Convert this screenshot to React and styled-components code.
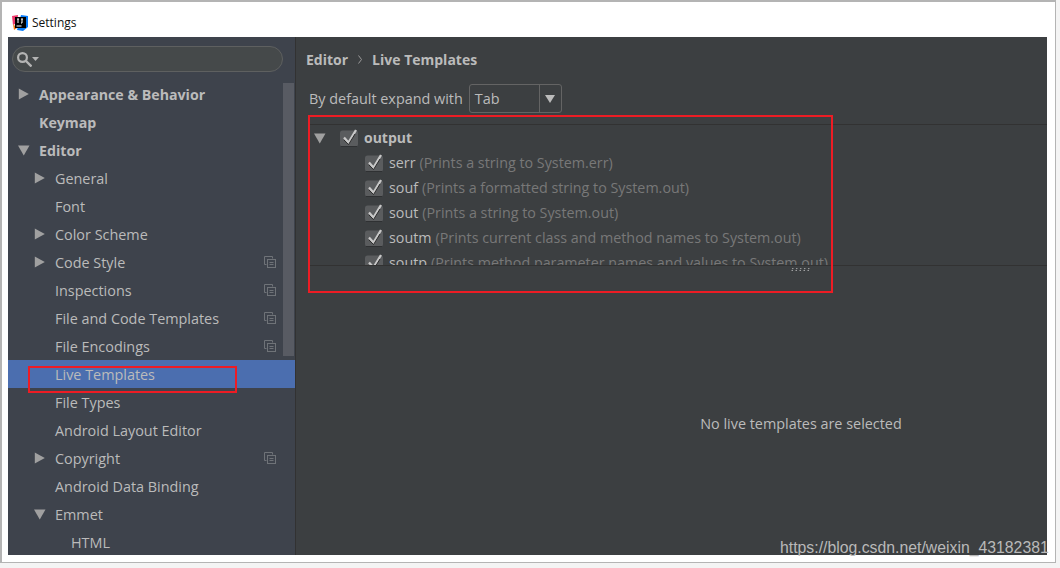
import React from 'react'
import styled, { createGlobalStyle } from 'styled-components'

const Global = createGlobalStyle`
  html, body {
    margin: 0;
    padding: 0;
    background: #f4f4f4;
    overflow: hidden;
  }
`

const Page = styled.div`
  position: relative;
  width: 1060px;
  height: 568px;
  box-sizing: border-box;
  padding-right: 4px;
  padding-bottom: 5px;
  font-family: 'Open Sans', 'Noto Sans', sans-serif;
`
const Shell = styled.div`
  height: 100%;
  box-sizing: border-box;
  border: 2px solid #b4b4b4;
  border-right-width: 1px;
  border-bottom-width: 1px;
  background: #fff;
  padding: 6px 8px 7px 6px;
`
const Win = styled.div`
  display: flex;
  flex-direction: column;
  height: 100%;
  background: #3c3f41;
`
const TitleBar = styled.div`
  display: flex;
  align-items: center;
  gap: 4px;
  height: 29px;
  padding-left: 4px;
  background: #fff;
  flex: none;
`
const TitleText = styled.span`
  font-size: 12px;
  color: #111;
`
const Body = styled.div`
  display: flex;
  flex: 1;
  min-height: 0;
`
const Sidebar = styled.div`
  position: relative;
  width: 287px;
  flex: none;
  background: #3e434c;
  border-right: 1px solid #323232;
  overflow: hidden;
  padding-top: 9px;
`
const SearchBox = styled.div`
  display: flex;
  align-items: center;
  box-sizing: border-box;
  width: 271px;
  height: 26px;
  margin-left: 4px;
  padding-left: 4px;
  border: 1px solid #5e6060;
  border-radius: 13px;
  background: #45494a;
`
const Tree = styled.div`
  margin-top: 8px;
`
const Row = styled.div`
  display: flex;
  align-items: center;
  height: 28px;
  padding-left: ${p => 10 + p.$depth * 16}px;
  background: ${p => (p.$selected ? '#4b6eaf' : 'transparent')};
  color: #bbbbbb;
  font-size: ${p => (p.$bold ? 14.2 : 14.4)}px;
  font-weight: ${p => (p.$bold ? 700 : 400)};
`
const ArrowSlot = styled.span`
  display: flex;
  align-items: center;
  width: 21px;
  flex: none;
`
const RowLabel = styled.span`
  flex: 1;
`
const CopySlot = styled.span`
  display: flex;
  margin-right: 19px;
`
const Scrollbar = styled.div`
  position: absolute;
  top: 46px;
  right: 1px;
  width: 11px;
  height: 273px;
  background: #585b63;
`
const Content = styled.div`
  flex: 1;
  display: flex;
  flex-direction: column;
  min-width: 0;
`
const Crumbs = styled.div`
  display: flex;
  align-items: center;
  gap: 10px;
  box-sizing: border-box;
  height: 47px;
  padding: 0 0 3px 10px;
  color: #bbbbbb;
  font-size: 14px;
  font-weight: 700;
`
const ExpandRow = styled.div`
  display: flex;
  align-items: center;
  gap: 6px;
  height: 29px;
  padding-left: 13px;
  color: #bbbbbb;
  font-size: 14.4px;
`
const Combo = styled.div`
  display: flex;
  box-sizing: border-box;
  width: 93px;
  height: 29px;
  border: 1px solid #646464;
  border-radius: 3px;
`
const ComboValue = styled.div`
  flex: 1;
  display: flex;
  align-items: center;
  padding-left: 5px;
  border-right: 1px solid #646464;
`
const ComboArrow = styled.div`
  display: flex;
  align-items: center;
  justify-content: center;
  width: 21px;
`
const TemplateList = styled.div`
  height: 140px;
  margin: 11px 0 0 13px;
  border-top: 1px solid #323232;
  border-bottom: 1px solid #323232;
  overflow: hidden;
`
const GroupRow = styled.div`
  display: flex;
  align-items: center;
  height: 25px;
  padding-left: 5px;
  color: #bbbbbb;
  font-size: 14px;
  font-weight: 700;
`
const GroupArrow = styled.span`
  display: flex;
  width: 26px;
`
const GroupName = styled.span`
  margin-left: 6px;
`
const ItemRow = styled.div`
  display: flex;
  align-items: center;
  height: 25px;
  padding-left: 56px;
  font-size: 14.3px;
  white-space: nowrap;
`
const ItemName = styled.span`
  margin-left: 6px;
  color: #bbbbbb;
`
const ItemDesc = styled.span`
  margin-left: 4px;
  color: #787878;
`
const Grip = styled.svg`
  position: absolute;
  left: 791px;
  top: 267px;
`
const EmptyNote = styled.div`
  flex: 1;
  display: flex;
  align-items: center;
  justify-content: center;
  padding: 25px 0 0 259px;
  color: #bbbbbb;
  font-size: 14.4px;
`
const RedBox = styled.div`
  position: absolute;
  box-sizing: border-box;
  border: 2px solid #ed1c24;
  left: ${p => p.$x}px;
  top: ${p => p.$y}px;
  width: ${p => p.$w}px;
  height: ${p => p.$h}px;
`
const Watermark = styled.div`
  position: absolute;
  left: 780px;
  top: 539px;
  font-family: 'Liberation Sans', Arial, sans-serif;
  font-size: 15.8px;
  line-height: 18px;
  color: #b9b9b9;
  white-space: nowrap;
`

const Logo = () => (
  <svg width="16" height="16" viewBox="0 0 16 16">
    <path d="M0 1 L6 0 L5 8 L1 10 Z" fill="#f0386b" />
    <path d="M1 9 L5 13 L2 15 Z" fill="#f97a12" />
    <path d="M9 0 L16 1 L16 12 L11 16 L5 15 Z" fill="#087cfa" />
    <rect x="3" y="2" width="11" height="11" fill="#000" />
    <rect x="4.5" y="10.5" width="5" height="1" fill="#fff" />
    <path d="M5 4 H7 M6 4 V8 M9 4 H11 M10 4 V8 H9" stroke="#fff" strokeWidth="1" fill="none" />
  </svg>
)

const SearchIcon = () => (
  <>
    <svg width="15" height="15" viewBox="0 0 15 15">
      <circle cx="5.5" cy="5.5" r="4.4" fill="none" stroke="#b4b4b4" strokeWidth="2.2" />
      <path d="M9 9 L14.5 14.5" stroke="#b4b4b4" strokeWidth="2.4" />
    </svg>
    <svg width="7" height="4" viewBox="0 0 7 4">
      <path d="M0 0 H7 L3.5 4 Z" fill="#b4b4b4" />
    </svg>
  </>
)

const Triangle = ({ open }) => (
  <svg width="12" height="12" viewBox="0 0 12 12">
    {open ? <path d="M0 1.5 H11.5 L5.75 11.5 Z" fill="#a0a0a0" /> : <path d="M0.8 0.5 L10.8 6 L0.8 11.5 Z" fill="#a0a0a0" />}
  </svg>
)

const CopyIcon = () => (
  <svg width="12" height="12" viewBox="0 0 12 12" fill="none" stroke="#6f7378">
    <path d="M2.5 8.5 H0.5 V0.5 H8.5 V2.5" />
    <rect x="3.5" y="3.5" width="8" height="8" />
    <path d="M5.5 6.5 H9.5 M5.5 8.5 H9.5" />
  </svg>
)

const Check = () => (
  <svg width="18" height="18" viewBox="0 0 18 18" style={{ flex: 'none' }}>
    <rect x="0" y="1.5" width="18" height="16" rx="2.5" fill="#5a5c5e" />
    <path d="M1 17.5 H17" stroke="#2f3133" />
    <path d="M4 8.5 L8.5 13.5 L16 1" fill="none" stroke="#c8c8c8" strokeWidth="2.3" />
    <path d="M4 11 L8.5 15.6 L15 5" fill="none" stroke="#2b2b2b" strokeWidth="1" />
  </svg>
)

const rows = [
  { label: 'Appearance & Behavior', depth: 0, arrow: 'closed', bold: true },
  { label: 'Keymap', depth: 0, bold: true },
  { label: 'Editor', depth: 0, arrow: 'open', bold: true },
  { label: 'General', depth: 1, arrow: 'closed' },
  { label: 'Font', depth: 1 },
  { label: 'Color Scheme', depth: 1, arrow: 'closed' },
  { label: 'Code Style', depth: 1, arrow: 'closed', copy: true },
  { label: 'Inspections', depth: 1, copy: true },
  { label: 'File and Code Templates', depth: 1, copy: true },
  { label: 'File Encodings', depth: 1, copy: true },
  { label: 'Live Templates', depth: 1, selected: true },
  { label: 'File Types', depth: 1 },
  { label: 'Android Layout Editor', depth: 1 },
  { label: 'Copyright', depth: 1, arrow: 'closed', copy: true },
  { label: 'Android Data Binding', depth: 1 },
  { label: 'Emmet', depth: 1, arrow: 'open' },
  { label: 'HTML', depth: 2 }
]

const templates = [
  ['serr', '(Prints a string to System.err)'],
  ['souf', '(Prints a formatted string to System.out)'],
  ['sout', '(Prints a string to System.out)'],
  ['soutm', '(Prints current class and method names to System.out)'],
  ['soutp', '(Prints method parameter names and values to System.out)']
]

export default function App() {
  return (
    <Page>
      <Global />
      <Shell>
        <Win>
          <TitleBar>
            <Logo />
            <TitleText>Settings</TitleText>
          </TitleBar>
          <Body>
            <Sidebar>
              <SearchBox>
                <SearchIcon />
              </SearchBox>
              <Tree>
                {rows.map(r => (
                  <Row key={r.label} $depth={r.depth} $bold={r.bold} $selected={r.selected}>
                    <ArrowSlot>{r.arrow && <Triangle open={r.arrow === 'open'} />}</ArrowSlot>
                    <RowLabel>{r.label}</RowLabel>
                    {r.copy && (
                      <CopySlot>
                        <CopyIcon />
                      </CopySlot>
                    )}
                  </Row>
                ))}
              </Tree>
              <Scrollbar />
            </Sidebar>
            <Content>
              <Crumbs>
                <span>Editor</span>
                <svg width="4" height="9" viewBox="0 0 4 9">
                  <path d="M0.5 0.5 L3.5 4.5 L0.5 8.5" fill="none" stroke="#999" />
                </svg>
                <span>Live Templates</span>
              </Crumbs>
              <ExpandRow>
                <span>By default expand with</span>
                <Combo>
                  <ComboValue>Tab</ComboValue>
                  <ComboArrow>
                    <svg width="10" height="8" viewBox="0 0 10 8">
                      <path d="M0 0 H10 L5 8 Z" fill="#bbb" />
                    </svg>
                  </ComboArrow>
                </Combo>
              </ExpandRow>
              <TemplateList>
                <GroupRow>
                  <GroupArrow>
                    <Triangle open />
                  </GroupArrow>
                  <Check />
                  <GroupName>output</GroupName>
                </GroupRow>
                {templates.map(([name, desc]) => (
                  <ItemRow key={name}>
                    <Check />
                    <ItemName>{name}</ItemName>
                    <ItemDesc>{desc}</ItemDesc>
                  </ItemRow>
                ))}
              </TemplateList>
              <EmptyNote>No live templates are selected</EmptyNote>
            </Content>
          </Body>
        </Win>
      </Shell>
      <Grip width="20" height="5" viewBox="0 0 20 5">
        <path d="M1 4 L2 1 M5 4 L6 1 M9 4 L10 1 M13 4 L14 1 M17 4 L18 1" stroke="#d8d8d8" strokeDasharray="1 1" />
      </Grip>
      <RedBox $x={28} $y={366} $w={209} $h={27} />
      <RedBox $x={308} $y={115} $w={525} $h={178} />
      <Watermark>https://blog.csdn.net/weixin_43182381</Watermark>
    </Page>
  )
}
